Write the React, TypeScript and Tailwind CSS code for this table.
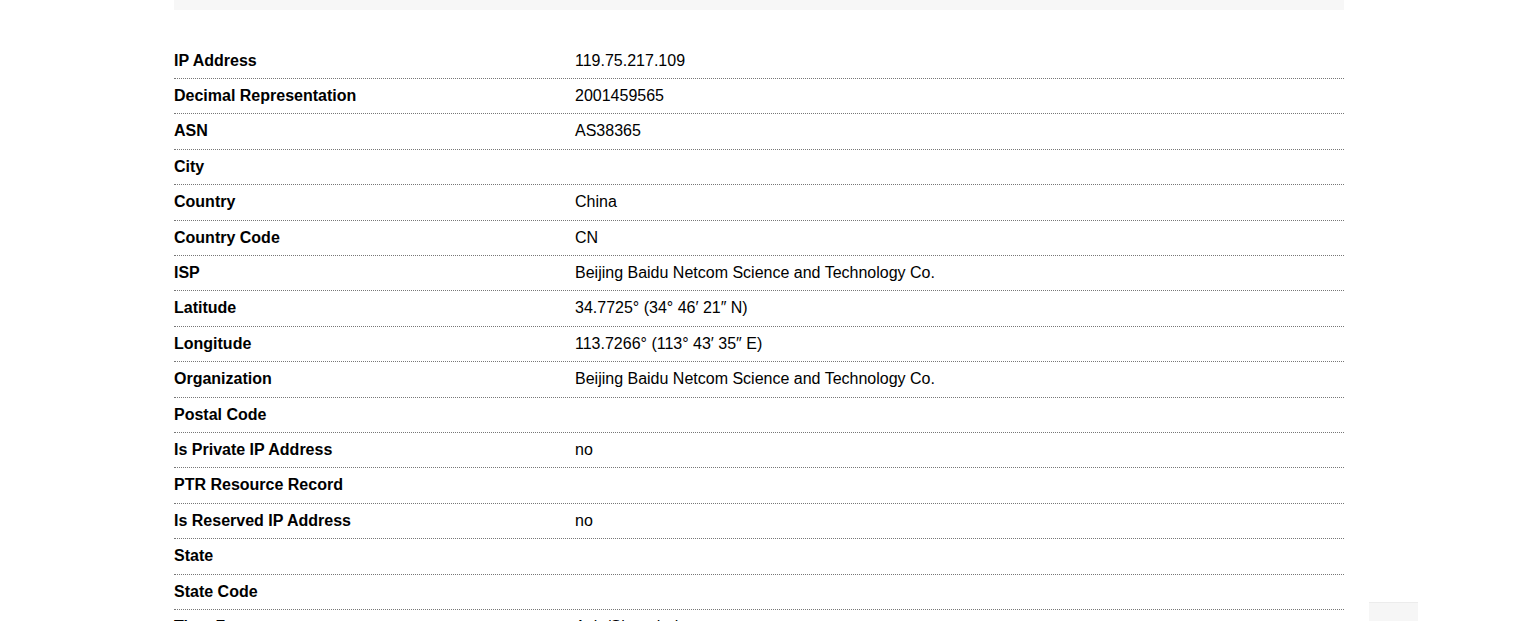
import * as React from "react";

// Lookup result table — label / value rows with dotted separators.
const rows: [string, string][] = [
  ["IP Address", "119.75.217.109"],
  ["Decimal Representation", "2001459565"],
  ["ASN", "AS38365"],
  ["City", ""],
  ["Country", "China"],
  ["Country Code", "CN"],
  ["ISP", "Beijing Baidu Netcom Science and Technology Co."],
  ["Latitude", "34.7725° (34° 46′ 21″ N)"],
  ["Longitude", "113.7266° (113° 43′ 35″ E)"],
  ["Organization", "Beijing Baidu Netcom Science and Technology Co."],
  ["Postal Code", ""],
  ["Is Private IP Address", "no"],
  ["PTR Resource Record", ""],
  ["Is Reserved IP Address", "no"],
  ["State", ""],
  ["State Code", ""],
  ["Time Zone", "Asia/Shanghai"],
];

export default function App() {
  return (
    <div className="relative min-h-screen bg-white font-['Liberation_Sans',Arial,sans-serif] text-[16px] text-black">
      <div className="ml-[174px] w-[1170px]">
        <div className="h-[10px] bg-[#f7f7f7]" />
        <div className="mt-[33.6px]">
          {rows.map(([label, value]) => (
            <div
              key={label}
              className="flex border-b border-dotted border-[#777] py-2 leading-[18.4px]"
            >
              <div className="w-[401px] shrink-0 font-bold">{label}</div>
              <div>{value}</div>
            </div>
          ))}
        </div>
      </div>
      <div className="fixed left-[1369px] top-[602px] h-[40px] w-[49px] border-t border-[#ececec] bg-[#f6f6f6]" />
    </div>
  );
}
